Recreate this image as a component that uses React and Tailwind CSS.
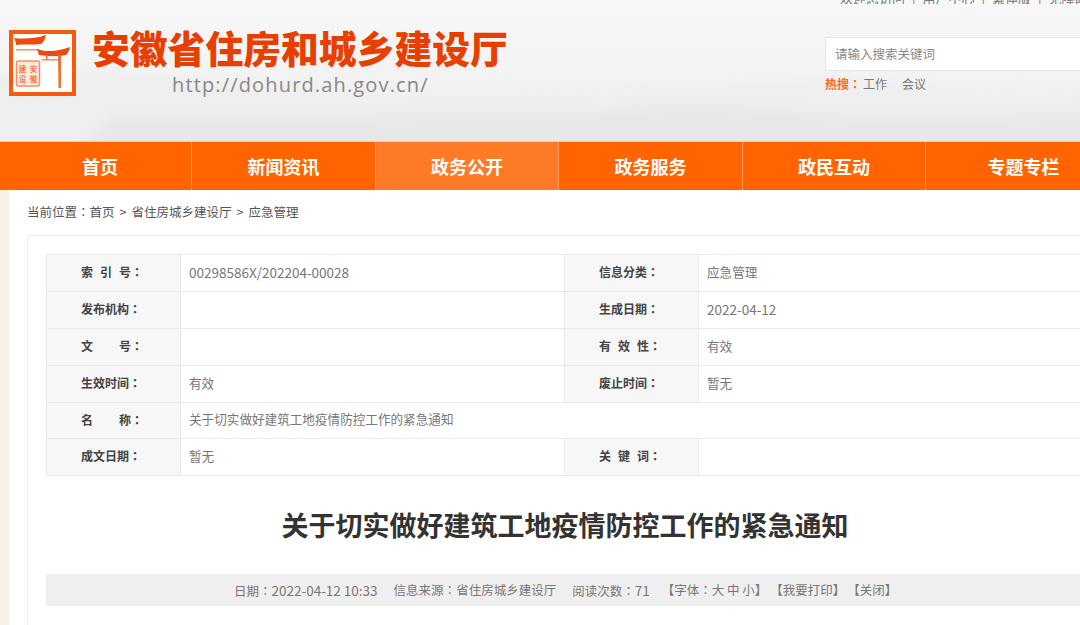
import React from 'react'

const SANS = "font-['Noto_Sans_CJK_SC','Liberation_Sans',sans-serif]"

const navItems = [
  { label: '首页', width: 'w-[183px]' },
  { label: '新闻资讯', width: 'w-[184px]' },
  { label: '政务公开', width: 'w-[183px]', active: true },
  { label: '政务服务', width: 'w-[184px]' },
  { label: '政民互动', width: 'w-[183px]' },
  { label: '专题专栏', width: 'w-[196px]' },
]

// the reference draws a centred full-width colon, which the TC cut of the font has
function Colon() {
  return <span className="font-['Noto_Sans_CJK_TC',sans-serif]">：</span>
}

function Logo() {
  return (
    <svg width="67" height="66" viewBox="0 0 67 66" className="shrink-0">
      <rect x="2" y="2" width="63" height="62" fill="#fff" stroke="#f85a0c" strokeWidth="4" />
      <path d="M5 8 C14 9 26 9 37 5 C36 9 35 12 32 14 C24 15 14 14 7 15 C7 12 6 10 5 8 Z" fill="#ee4a10" />
      <path d="M7 19 L30 19 L30 20.5 L7 20.5 Z" fill="#f5926a" />
      <path d="M28 19 C36 22 48 22 61 17 C60 21 59 23 57 25 C46 27 36 26 30 25 Z" fill="#ee4a10" />
      <path d="M33 29 L51 29 L51 30.5 L33 30.5 Z" fill="#f58a5c" />
      <path d="M49 25 L52 25 L52 58 L49.5 58 Z" fill="#f0703a" />
      <path d="M37 25 L38.5 25 L38.5 30 L37 30 Z" fill="#f0703a" />
      <rect x="7.5" y="31" width="23" height="25" rx="1.5" fill="#fde8dc" stroke="#f78f5e" strokeWidth="1.5" />
      <g fontSize="7.5" fill="#ee4a10" fontFamily="'Noto Sans CJK SC',sans-serif" textAnchor="middle">
        <text x="24.5" y="42">安</text>
        <text x="24.5" y="52">徽</text>
        <text x="13.5" y="42">建</text>
        <text x="13.5" y="52">设</text>
      </g>
    </svg>
  )
}

function Mountains() {
  return (
    <svg className="absolute left-0 bottom-0" width="1080" height="90" viewBox="0 0 1080 90">
      <defs>
        <filter id="soft" x="-5%" y="-20%" width="110%" height="140%">
          <feGaussianBlur stdDeviation="5" />
        </filter>
      </defs>
      <g filter="url(#soft)">
        <path d="M-20 30 C60 18 120 18 190 30 C300 46 420 58 520 54 C640 48 760 40 820 30 C870 22 930 44 1000 50 L1100 48 L1100 130 L-20 130 Z" fill="#efefef" />
        <path d="M40 130 L110 66 C190 62 300 70 400 62 C480 58 560 66 640 56 C700 46 790 60 860 64 C960 68 1030 62 1100 58 L1100 130 Z" fill="#e8e8e8" />
      </g>
    </svg>
  )
}

function PageStrip() {
  return (
    <svg className="w-[9px] h-full shrink-0" width="9" height="435">
      <defs>
        <filter id="paper">
          <feTurbulence type="fractalNoise" baseFrequency="0.18" numOctaves="3" seed="4" />
          <feColorMatrix values="0 0 0 0 0.93  0 0 0 0 0.89  0 0 0 0 0.80  0 0 0 -1.6 1.1" />
        </filter>
      </defs>
      <rect width="9" height="435" fill="#f7f2e7" />
      <rect width="9" height="435" filter="url(#paper)" />
    </svg>
  )
}

function Label({ chars, gap }) {
  return (
    <div className={`flex pl-[34px] ${gap}`}>
      {chars.map((c, i) => (
        <span key={i}>{c}{i === chars.length - 1 && <Colon />}</span>
      ))}
    </div>
  )
}

function Th({ children }) {
  return (
    <td className="bg-[#f7f7f7] border border-[#eaeaea] text-[12px] font-bold text-[#444] p-0 pb-[2px] align-middle">
      {children}
    </td>
  )
}

function Td({ children, colSpan, className = 'text-[12.6px]' }) {
  return (
    <td colSpan={colSpan} className={`border border-[#eaeaea] pl-2 pb-[2px] text-[#777] align-middle ${className}`}>
      {children}
    </td>
  )
}

export default function App() {
  return (
    <div className={`w-[1080px] h-[625px] overflow-hidden bg-white ${SANS}`}>
      {/* header */}
      <div className="relative h-[142px] bg-gradient-to-b from-[#f8f8f8] via-[#f3f3f3] to-[#e9e9e9] border-b border-[#f5c9a8]">
        <Mountains />
        <div className="relative h-[4px] overflow-hidden flex items-end pl-[840px] gap-[7px] text-[13px] leading-none text-[#777] whitespace-nowrap">
          <span>欢迎您访问</span><span>|</span><span>用户中心</span><span>|</span><span>繁体版</span><span>|</span><span>无障碍</span>
        </div>
        <div className="relative flex pl-[9px] pt-[26px]">
          <Logo />
          <div className="ml-[17px] w-[460px] shrink-0">
            <div className="text-[37.8px] leading-[40px] font-black text-[#e83e00] whitespace-nowrap -mt-[3px] -ml-[1px]">安徽省住房和城乡建设厅</div>
            <div className="mt-[6px] ml-[79px] text-[20px] leading-[24px] tracking-[1.15px] text-[#888] font-['Open_Sans',sans-serif]">http://dohurd.ah.gov.cn/</div>
          </div>
          <div className="ml-[272px] pt-[7px] w-[300px] shrink-0">
            <div className="h-[34px] border border-[#e6e6e6] bg-white pl-[9px] flex items-center text-[12.5px] text-[#888]">请输入搜索关键词</div>
            <div className="mt-[5px] flex text-[12px] leading-[16px] text-[#777]">
              <span className="font-bold text-[#ff6a13]">热搜<Colon /></span>
              <span className="ml-[2px]">工作</span>
              <span className="ml-[15px]">会议</span>
            </div>
          </div>
        </div>
      </div>

      {/* nav */}
      <div className="h-[48px] bg-[#ff6400] pl-[9px] flex w-[1080px] overflow-hidden">
        {navItems.map((item) => (
          <div
            key={item.label}
            className={`h-full shrink-0 flex items-center justify-center text-[18px] font-bold text-white border-r border-[#ff9a5c] ${item.width} ${item.active ? 'bg-[#ff7a26]' : ''}`}
          >
            {item.label}
          </div>
        ))}
      </div>

      {/* body */}
      <div className="flex h-[435px]">
        <PageStrip />
        <div className="w-[1200px] shrink-0 pl-[18px]">
          <div className="h-[45px] pt-[14px] text-[12.5px] leading-[16px] text-[#555] flex gap-[5px]">
            <span>当前位置<Colon />首页</span><span>&gt;</span><span>省住房城乡建设厅</span><span>&gt;</span><span>应急管理</span>
          </div>
          <div className="border border-[#eeeeee] w-[1100px] h-[420px] pl-[18px] pt-[18px]">
            <table className="w-[1038px] table-fixed border-collapse">
              <colgroup>
                <col className="w-[134px]" />
                <col className="w-[384px]" />
                <col className="w-[134px]" />
                <col />
              </colgroup>
              <tbody>
                <tr className="h-[37px]">
                  <Th><Label chars={['索', '引', '号']} gap="gap-[7px]" /></Th>
                  <Td className="text-[13.5px]">00298586X/202204-00028</Td>
                  <Th><Label chars={['信', '息', '分', '类']} gap="gap-0" /></Th>
                  <Td>应急管理</Td>
                </tr>
                <tr className="h-[37px]">
                  <Th><Label chars={['发', '布', '机', '构']} gap="gap-0" /></Th>
                  <Td />
                  <Th><Label chars={['生', '成', '日', '期']} gap="gap-0" /></Th>
                  <Td className="text-[13.5px]">2022-04-12</Td>
                </tr>
                <tr className="h-[37px]">
                  <Th><Label chars={['文', '号']} gap="gap-[26px]" /></Th>
                  <Td />
                  <Th><Label chars={['有', '效', '性']} gap="gap-[7px]" /></Th>
                  <Td>有效</Td>
                </tr>
                <tr className="h-[37px]">
                  <Th><Label chars={['生', '效', '时', '间']} gap="gap-0" /></Th>
                  <Td>有效</Td>
                  <Th><Label chars={['废', '止', '时', '间']} gap="gap-0" /></Th>
                  <Td>暂无</Td>
                </tr>
                <tr className="h-[36px]">
                  <Th><Label chars={['名', '称']} gap="gap-[26px]" /></Th>
                  <Td colSpan={3}>关于切实做好建筑工地疫情防控工作的紧急通知</Td>
                </tr>
                <tr className="h-[37px]">
                  <Th><Label chars={['成', '文', '日', '期']} gap="gap-0" /></Th>
                  <Td>暂无</Td>
                  <Th><Label chars={['关', '键', '词']} gap="gap-[7px]" /></Th>
                  <Td />
                </tr>
              </tbody>
            </table>
            <h1 className="w-[1038px] mt-[30px] text-center text-[27px] leading-[38px] font-bold text-[#333]">关于切实做好建筑工地疫情防控工作的紧急通知</h1>
            <div className="w-[1038px] mt-[30px] h-[32px] bg-[#efefef] pl-[188px] flex items-center gap-[16px] text-[12.5px] text-[#777] whitespace-nowrap">
              <span>日期<Colon /><span className="text-[13.5px]">2022-04-12 10:33</span></span>
              <span>信息来源<Colon />省住房城乡建设厅</span>
              <span>阅读次数<Colon /><span className="text-[13.5px]">71</span></span>
              <span className="flex -ml-[4px]">
                <span className="mr-[3px]">【字体<Colon />大 中 小】</span>
                <span className="mr-[2px]">【我要打印】</span>
                <span>【关闭】</span>
              </span>
            </div>
          </div>
        </div>
      </div>
    </div>
  )
}
